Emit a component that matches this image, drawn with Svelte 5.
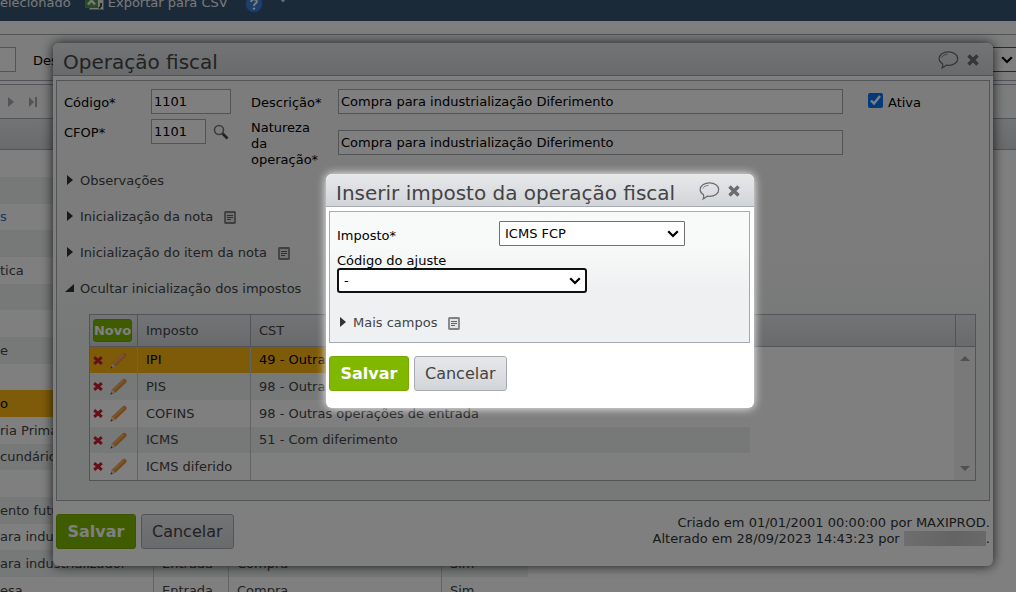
<script>
    let ativa = true;
    let imposto = 'ICMS FCP';
    let ajuste = '-';

    const operacoes = [
        {nome: ''},
        {nome: ''},
        {nome: 's', link: true},
        {nome: ''},
        {nome: 'tica'},
        {nome: ''},
        {nome: ''},
        {nome: 'e'},
        {nome: ''},
        {nome: 'o', ativo: true},
        {nome: 'ria Prima'},
        {nome: 'cundário'},
        {nome: ''},
        {nome: 'ento futuro'},
        {nome: 'ara industrializador'},
        {nome: 'ara industrializador', tipo: 'Entrada', grupo: 'Compra', ativa: 'Sim'},
        {nome: 'esa', tipo: 'Entrada', grupo: 'Compra', ativa: 'Sim'},
    ];

    const impostos = [
        {nome: 'IPI', cst: '49 - Outras operações de entrada', ativo: true},
        {nome: 'PIS', cst: '98 - Outras operações de entrada'},
        {nome: 'COFINS', cst: '98 - Outras operações de entrada'},
        {nome: 'ICMS', cst: '51 - Com diferimento'},
        {nome: 'ICMS diferido', cst: ''},
    ];
</script>

{#snippet balao()}
    <svg width="21" height="20" viewBox="0 0 22 20" fill="none" stroke="#6b6c6f" stroke-width="1.3">
        <path d="M4.600 13.600C2.400 12.300 1.200 10.600 1.200 8.600 1.200 4.600 5.600 1.500 11 1.500s9.600 3.100 9.600 7.100-4.200 7-9.600 7c-.9 0-1.700 0-2.400-.2-1.300 1.300-2.800 2.300-4.300 2.900C5 17 5.200 15.200 4.600 13.600Z"/>
        <path d="M4 7.400C4.900 5.400 7 4.300 10 4" stroke-width=".9"/>
    </svg>
{/snippet}

{#snippet fechar()}
    <svg width="12" height="12" viewBox="0 0 12 12" stroke="#6b6c6f" stroke-width="3.400">
        <path d="M1.500 1.500l9 9M10.500 1.500l-9 9"/>
    </svg>
{/snippet}

{#snippet nota()}
    <svg class="nota" width="12" height="13" viewBox="0 0 12 13" fill="#e4e4e4" stroke="#808183">
        <rect x="1" y="1" width="10" height="11" rx=".5" stroke-width="1.800"/>
        <path d="M3 4.500h6M3 6.500h6M3 8.500h4" stroke="#606163"/>
    </svg>
{/snippet}

{#snippet seta()}
    <svg class="seta" width="12" height="8" viewBox="0 0 12 8" fill="none" stroke="#000" stroke-width="2.200">
        <path d="M1.200 1.200L6 6l4.800-4.800"/>
    </svg>
{/snippet}

<div class="page">
    <div class="toolbar">
        <span>elecionado</span>
        <svg width="19" height="18" viewBox="0 0 19 18">
            <rect x="4.500" y=".5" width="14" height="16" fill="#e8eee5" stroke="#8a9a86"/>
            <rect x="0" y="0" width="13" height="15" fill="#4f9b46"/>
            <path d="M3 3.500l7 8M10 3.500l-7 8" stroke="#f2f2f2" stroke-width="2.400"/>
            <path d="M16 10v3l-2 2.500" fill="none" stroke="#444" stroke-width="2"/>
        </svg>
        <span>Exportar para CSV</span>
        <svg class="ajuda" width="18" height="18" viewBox="0 0 18 18">
            <circle cx="9" cy="9" r="8.500" fill="#3d7fd4" stroke="#2b5ca8"/>
            <path d="M6.200 7c0-3.800 5.800-3.400 5.600-.3C11.700 8.600 9 8.500 9 11" fill="none" stroke="#fff" stroke-width="1.900"/>
            <circle cx="9" cy="13.600" r="1.200" fill="#fff"/>
        </svg>
        <svg class="mais" width="8" height="5" viewBox="0 0 8 5"><path d="M0 0h8L4 4.500z" fill="#ddd"/></svg>
    </div>

    <div class="filter">
        <input class="filter-code" aria-label="Código">
        <label for="filtro">Descrição</label>
        <div class="filter-select">
            <select id="filtro"><option></option></select>
            {@render seta()}
        </div>
    </div>

    <div class="pager">
        <svg width="40" height="12" viewBox="0 0 40 12" fill="#a3a8b0">
            <path d="M8 1l6 5-6 5zM29 1l5 5-5 5zM35 1h2v10h-2z"/>
        </svg>
    </div>
    <div class="list-head"></div>

    <table class="list">
        <tbody>
            {#each operacoes as op}
                <tr class:ativo={op.ativo}>
                    <td>{#if op.link}<a href="#op">{op.nome}</a>{:else}{op.nome}{/if}</td>
                    <td>{op.tipo ?? ''}</td>
                    <td>{op.grupo ?? ''}</td>
                    <td>{op.ativa ?? ''}</td>
                </tr>
            {/each}
        </tbody>
    </table>

    <div class="dialog operacao">
        <div class="title">
            <h1>Operação fiscal</h1>
            <button aria-label="Comentários">{@render balao()}</button>
            <button aria-label="Fechar">{@render fechar()}</button>
        </div>
        <div class="panel">
            <div class="form">
                <div class="codes">
                    <div class="field">
                        <label for="codigo">Código*</label>
                        <input id="codigo" value="1101">
                    </div>
                    <div class="field">
                        <label for="cfop">CFOP*</label>
                        <input id="cfop" class="short" value="1101">
                        <button aria-label="Pesquisar">
                            <svg width="16" height="16" viewBox="0 0 16 16" fill="none">
                                <circle cx="6" cy="6" r="4.500" stroke="#77797c" stroke-width="1.600"/>
                                <path d="M9.500 9.500l5 5" stroke="#44464a" stroke-width="2.600"/>
                            </svg>
                        </button>
                    </div>
                </div>
                <div class="texts">
                    <div class="field">
                        <label for="descricao">Descrição*</label>
                        <input id="descricao" value="Compra para industrialização Diferimento">
                    </div>
                    <div class="field natureza">
                        <label for="natureza">Natureza da operação*</label>
                        <input id="natureza" value="Compra para industrialização Diferimento">
                    </div>
                </div>
                <label class="check"><input type="checkbox" bind:checked={ativa}>Ativa</label>
            </div>

            <div class="sections">
                <button class="section"><i class="tri"></i>Observações</button>
                <button class="section"><i class="tri"></i>Inicialização da nota {@render nota()}</button>
                <button class="section"><i class="tri"></i>Inicialização do item da nota {@render nota()}</button>
                <button class="section"><i class="tri open"></i>Ocultar inicialização dos impostos</button>
            </div>

            <div class="grid">
                <div class="grid-head">
                    <div class="c-acoes"><button class="novo">Novo</button></div>
                    <div class="c-nome">Imposto</div>
                    <div class="c-cst">CST</div>
                    <div class="c-bar"></div>
                </div>
                <div class="grid-body">
                    <table>
                        <tbody>
                            {#each impostos as item}
                                <tr class:ativo={item.ativo}>
                                    <td class="c-acoes">
                                        <button aria-label="Excluir">
                                            <svg width="10" height="9" viewBox="0 0 10 9" stroke="#c8202c" stroke-width="3">
                                                <path d="M1.200 1.200l7.600 6.600M8.800 1.200L1.200 7.800"/>
                                            </svg>
                                        </button>
                                        <button aria-label="Editar">
                                            <svg width="17" height="17" viewBox="0 0 17 17">
                                                <path d="M.5 16.500l1.500-5L12.500 1.500q2-1.500 3.400 0t.1 3.300L5.500 14.800z" fill="#e8963c"/>
                                                <path d="M3 12.500L13.500 2.500" stroke="#f8b570" stroke-width="1.200"/>
                                                <path d="M.5 16.500l1.500-5 3.500 3.300z" fill="#e9d3b5"/>
                                                <path d="M.5 16.500l.7-2.200 1.500 1.500z" fill="#444"/>
                                            </svg>
                                        </button>
                                    </td>
                                    <td class="c-nome">{item.nome}</td>
                                    <td class="c-cst">{item.cst}</td>
                                </tr>
                            {/each}
                        </tbody>
                    </table>
                    <div class="bar">
                        <svg width="10" height="5" viewBox="0 0 10 5"><path d="M0 5L5 0l5 5z" fill="#a3a3a3"/></svg>
                        <svg width="10" height="5" viewBox="0 0 10 5"><path d="M0 0h10L5 5z" fill="#a3a3a3"/></svg>
                    </div>
                </div>
            </div>
        </div>
        <div class="actions">
            <button class="btn primary">Salvar</button>
            <button class="btn">Cancelar</button>
            <p class="log">
                Criado em 01/01/2001 00:00:00 por MAXIPROD.<br>
                Alterado em 28/09/2023 14:43:23 por <span class="hidden-name"></span>.
            </p>
        </div>
    </div>

    <div class="shade"></div>

    <div class="dialog imposto">
        <div class="title">
            <h2>Inserir imposto da operação fiscal</h2>
            <button aria-label="Comentários">{@render balao()}</button>
            <button aria-label="Fechar">{@render fechar()}</button>
        </div>
        <div class="panel">
            <div class="row">
                <label for="imposto">Imposto*</label>
                <div class="select">
                    <select id="imposto" bind:value={imposto}><option>ICMS FCP</option></select>
                    {@render seta()}
                </div>
            </div>
            <label class="above" for="ajuste">Código do ajuste</label>
            <div class="select focused">
                <select id="ajuste" bind:value={ajuste}><option>-</option></select>
                {@render seta()}
            </div>
            <button class="section"><i class="tri"></i>Mais campos {@render nota()}</button>
        </div>
        <div class="actions">
            <button class="btn primary">Salvar</button>
            <button class="btn">Cancelar</button>
        </div>
    </div>
</div>

<style>
    .page {
        position: relative;
        height: 100vh;
        overflow: hidden;
        background: #fff;
        color: #000;
        font: 13px/16px Verdana, "DejaVu Sans", sans-serif;
    }

    .page :global(*) {
        box-sizing: border-box;
    }

    input, select, button {
        font: inherit;
        color: inherit;
        margin: 0;
    }

    button {
        border: 0;
        padding: 0;
        background: none;
    }

    svg {
        display: block;
        flex: none;
    }

    .toolbar {
        height: 21px;
        padding-bottom: 10px;
        display: flex;
        align-items: flex-end;
        gap: 4px;
        overflow: hidden;
        background: #365470;
        color: #f0f0f0;
        white-space: nowrap;
    }

    .toolbar span + svg {
        margin-left: 10px;
    }

    .toolbar .mais {
        margin: 0 0 8px 12px;
    }

    .toolbar .ajuda {
        margin: 0 0 -2px 13px;
    }

    .filter {
        margin-top: 13px;
        height: 47px;
        padding-bottom: 8px;
        border: solid #a5a9b1;
        border-width: 1px 0;
        background: #f8faf9;
        display: flex;
        align-items: flex-end;
    }

    .filter-code {
        width: 16px;
        height: 25px;
        border: 1px solid #a5a9b1;
        border-left: 0;
        background: #fff;
    }

    .filter label {
        margin-left: 17px;
        padding-bottom: 3px;
    }

    .filter-select {
        position: relative;
        margin-left: auto;
        width: 60px;
        height: 25px;
    }

    .filter-select select {
        appearance: none;
        width: 100%;
        height: 25px;
        border: 1px solid #555;
        border-right: 0;
        background: #fff;
    }

    .filter-select :global(.seta) {
        position: absolute;
        right: 3px;
        top: 9px;
    }

    .pager {
        margin-top: 3px;
        height: 34px;
        border-top: 1px solid #a5a9b1;
        background: #f8faf9;
        display: flex;
        align-items: center;
    }

    .list-head {
        height: 32px;
        border: solid #a5a9b1;
        border-width: 1px 0;
        background: linear-gradient(#e6e8ea, #d2d5d9);
    }

    table {
        border-collapse: separate;
        border-spacing: 0;
        table-layout: fixed;
    }

    .list {
        width: 528px;
        color: #444;
    }

    .list td {
        height: 27px;
        padding: 0 8px;
        border-right: 1px solid #c4c7cc;
        white-space: nowrap;
    }

    .list tr:nth-child(3n) td {
        height: 26px;
    }

    .list td:nth-child(1) {
        width: 154px;
        padding: 0;
    }

    .list td:nth-child(2) {
        width: 75px;
    }

    .list td:nth-child(3) {
        width: 213px;
    }

    .list td:last-child {
        border-right: 0;
    }

    .list tr:nth-child(even) {
        background: #eef1f0;
    }

    .list a {
        color: #2a70b8;
        text-decoration: none;
    }

    tr.ativo, .list tr.ativo {
        background: #fdb612;
        color: #000;
    }

    .dialog {
        position: absolute;
        border-radius: 6px;
        background: #fff;
    }

    .operacao {
        top: 43px;
        left: 53px;
        right: 23px;
        box-shadow: 0 0 12px rgba(0, 0, 0, .8);
    }

    .shade {
        position: absolute;
        inset: 0;
        background: rgba(0, 0, 0, .5);
    }

    .imposto {
        top: 174px;
        left: 326px;
        right: 262px;
        padding-bottom: 3px;
        box-shadow: 0 0 10px #fff;
    }

    .title {
        height: 33px;
        padding: 2px 14px 0 10px;
        border-bottom: 1px solid #a5a9b1;
        border-radius: 6px 6px 0 0;
        background: linear-gradient(#e7e8ea, #d2d5d9);
        display: flex;
        align-items: center;
        gap: 8px;
    }

    .title h1, .title h2 {
        flex: 1;
        margin: 0;
        padding-top: 3px;
        color: #444;
        font-size: 20px;
        font-weight: normal;
        line-height: 24px;
        white-space: nowrap;
    }

    .panel {
        margin: 4px 3px 0;
        border: 1px solid #a5a9b1;
    }

    .operacao .panel {
        padding: 8px 13px 19px 7px;
        background: linear-gradient(#f8f8f8, #f8f8f8 40%, #eff3f1 60%);
    }

    .form {
        display: flex;
        align-items: flex-start;
    }

    .codes {
        display: flex;
        flex-direction: column;
        gap: 5px;
        width: 187px;
    }

    .texts {
        flex: 1;
    }

    .field {
        display: flex;
        align-items: center;
    }

    .codes label, .texts label {
        width: 87px;
        flex: none;
        padding-top: 2px;
    }

    .texts .natureza label {
        padding: 4px 10px 0 0;
    }

    .field input {
        width: 80px;
        height: 25px;
        padding: 0 2px;
        border: 1px solid #a5a9ad;
        background: #fff;
    }

    .texts input {
        flex: 1;
    }

    .field input.short {
        width: 55px;
    }

    .field button {
        margin-left: 7px;
    }

    .natureza {
        margin-top: 2px;
    }

    .check {
        display: flex;
        align-items: flex-start;
        gap: 5px;
        width: 133px;
        padding: 4px 0 0 25px;
        line-height: 20px;
    }

    .check input {
        width: 15px;
        height: 15px;
        accent-color: #0a74f5;
    }

    .sections {
        display: flex;
        flex-direction: column;
        align-items: flex-start;
        gap: 20px;
        margin-top: 5px;
    }

    .section {
        display: flex;
        align-items: center;
        color: #444;
    }

    .section :global(.nota) {
        margin: 1px 0 0 11px;
    }

    .tri {
        width: 0;
        margin: 0 7px 2px 3px;
        border: solid transparent;
        border-width: 5px 0 5px 6px;
        border-left-color: #333;
    }

    .tri.open {
        margin: 0 6px 2px 1px;
        border-width: 0 0 8px 9px;
        border-color: transparent transparent #333;
    }

    .grid {
        margin: 17px 0 0 25px;
        border: 1px solid #a5a9b1;
        background: #fff;
        color: #444;
    }

    .grid-head {
        display: flex;
        height: 32px;
        line-height: 31px;
        border-bottom: 1px solid #a5a9b1;
        background: linear-gradient(#e6e8ea, #d2d5d9);
    }

    .grid-head > div {
        border-right: 1px solid #a5a9b1;
    }

    .c-acoes {
        width: 48px;
    }

    .c-nome {
        width: 113px;
        padding: 0 8px;
    }

    .c-cst {
        flex: 1;
        padding: 0 8px;
    }

    .grid-head .c-bar {
        width: 19px;
        border-right: 0;
    }

    .grid-head .c-acoes {
        padding: 4px 5px 0 3px;
    }

    .novo {
        display: flex;
        align-items: center;
        justify-content: center;
        width: 39px;
        height: 23px;
        border: 1px solid #76a900;
        border-radius: 3px;
        background: #80b800;
        color: #fff;
        font-weight: bold;
        line-height: 16px;
    }

    .grid-body {
        display: flex;
        justify-content: space-between;
    }

    .grid-body table {
        width: 660px;
    }

    .grid-body td {
        height: 27px;
        border-right: 1px solid #c4c7cc;
        white-space: nowrap;
    }

    .grid-body tr:nth-child(3n + 1) td {
        height: 26px;
    }

    .grid-body td:last-child {
        border-right: 0;
    }

    .grid-body tr:nth-child(even) {
        background: #eef1f0;
    }

    .grid-body td.c-acoes {
        padding: 0 0 0 3px;
    }

    .grid-body td button {
        display: inline-block;
        vertical-align: middle;
    }

    .grid-body td button + button {
        margin-left: 3px;
    }

    .bar {
        width: 21px;
        padding: 9px 5px;
        background: #f3f3f3;
        display: flex;
        flex-direction: column;
        justify-content: space-between;
        align-items: center;
    }

    .actions {
        display: flex;
        align-items: flex-start;
        gap: 5px;
        padding: 13px 3px 14px;
    }

    .operacao .actions {
        padding-bottom: 17px;
    }

    .btn {
        min-width: 80px;
        height: 35px;
        padding: 0 10px;
        border: 1px solid #a5a9b1;
        border-radius: 3px;
        background: linear-gradient(#e7e8ea, #d2d5d9);
        color: #444;
        font-size: 16px;
    }

    .btn.primary {
        border-color: #76a900;
        background: #80b800;
        color: #fff;
        font-weight: bold;
    }

    .log {
        margin: 1px 0 0 auto;
        color: #333;
        text-align: right;
    }

    .hidden-name {
        display: inline-block;
        width: 82px;
        height: 15px;
        vertical-align: top;
        background: linear-gradient(90deg, #dcdcdc, #c8c8c8 60%, #d2d2d2);
    }

    .imposto .panel {
        margin-right: 4px;
        padding: 9px 7px 11px;
        background: linear-gradient(#f8faf9, #f8faf9 25%, #eff0f2 60%);
    }

    .row {
        display: flex;
        align-items: center;
    }

    .row label {
        width: 162px;
        padding-top: 4px;
    }

    .select {
        position: relative;
        width: 186px;
    }

    .select select {
        display: block;
        appearance: none;
        width: 100%;
        height: 25px;
        padding: 0 5px;
        border: 1px solid #707070;
        border-radius: 1px;
        background: #fff;
    }

    .select :global(.seta) {
        position: absolute;
        right: 6px;
        top: 9px;
    }

    .above {
        display: block;
        margin-top: 7px;
        height: 15px;
    }

    .focused {
        width: 250px;
    }

    .focused select {
        border: 2px solid #101010;
        border-radius: 3px;
    }

    .imposto .section {
        margin-top: 22px;
    }
</style>
